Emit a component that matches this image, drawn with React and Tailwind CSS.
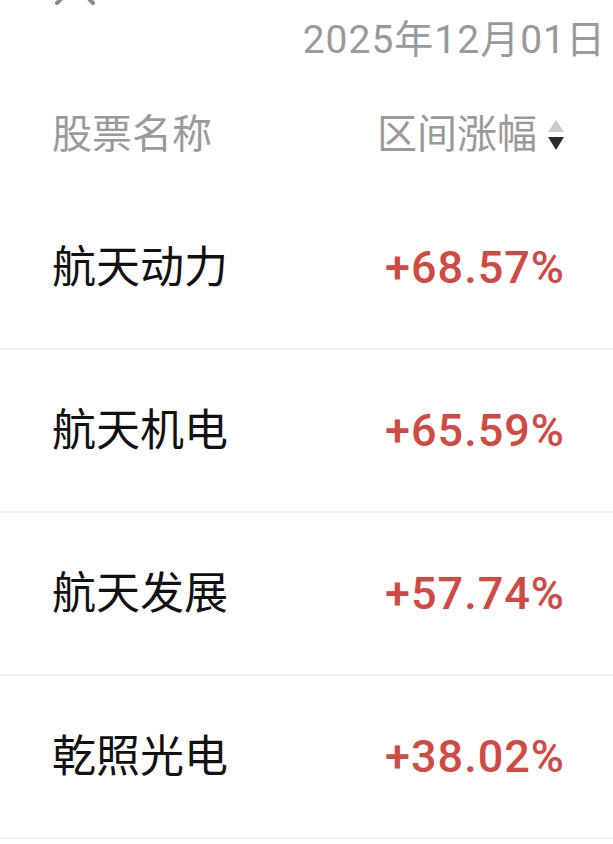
import React from 'react';

const rows = [
  { name: '航天动力', change: '+68.57%' },
  { name: '航天机电', change: '+65.59%' },
  { name: '航天发展', change: '+57.74%' },
  { name: '乾照光电', change: '+38.02%' },
];

const SortIcon = () => (
  <svg width="18" height="34" viewBox="0 0 18 34" className="shrink-0">
    <path d="M9 2 L17 14 L1 14 Z" fill="#c9cdd3" />
    <path d="M1 19 L17 19 L9 32 Z" fill="#2b2b2b" />
  </svg>
);

export default function App() {
  return (
    <div className="relative w-[613px] h-[844px] overflow-hidden bg-white font-['Roboto','Noto_Sans_CJK_SC',sans-serif]">
      {/* close icon, mostly scrolled off the top */}
      <svg
        width="40"
        height="40"
        viewBox="0 0 40 40"
        className="absolute left-[55px] top-[-35px]"
      >
        <path d="M2 2 L38 38 M38 2 L2 38" stroke="#8a8a8a" strokeWidth="4" strokeLinecap="round" />
      </svg>

      {/* date */}
      <div className="flex justify-end pt-[18px] pr-[7px] h-[62px]">
        <span className="text-[39px] leading-[44px] text-[#999999] tracking-[1px]">2025年12月01日</span>
      </div>

      {/* table header */}
      <div className="flex items-center justify-between h-[48px] mt-[49px] mb-[28px] pl-[52px] pr-[48px]">
        <span className="text-[40px] leading-[48px] text-[#9a9a9a]">股票名称</span>
        <div className="flex items-center gap-[10px]">
          <span className="text-[40px] leading-[48px] text-[#9a9a9a]">区间涨幅</span>
          <SortIcon />
        </div>
      </div>

      {/* rows */}
      <div className="flex flex-col">
        {rows.map((r) => (
          <div
            key={r.name}
            className="flex items-center justify-between h-[163px] border-b-2 border-[#f1f1f1] pl-[52px] pr-[48px]"
          >
            <span className="text-[44px] leading-[52px] text-[#111111]">{r.name}</span>
            <span className="text-[45px] leading-[52px] font-medium text-[#cf4a43] tracking-[1px]">{r.change}</span>
          </div>
        ))}
      </div>
    </div>
  );
}
